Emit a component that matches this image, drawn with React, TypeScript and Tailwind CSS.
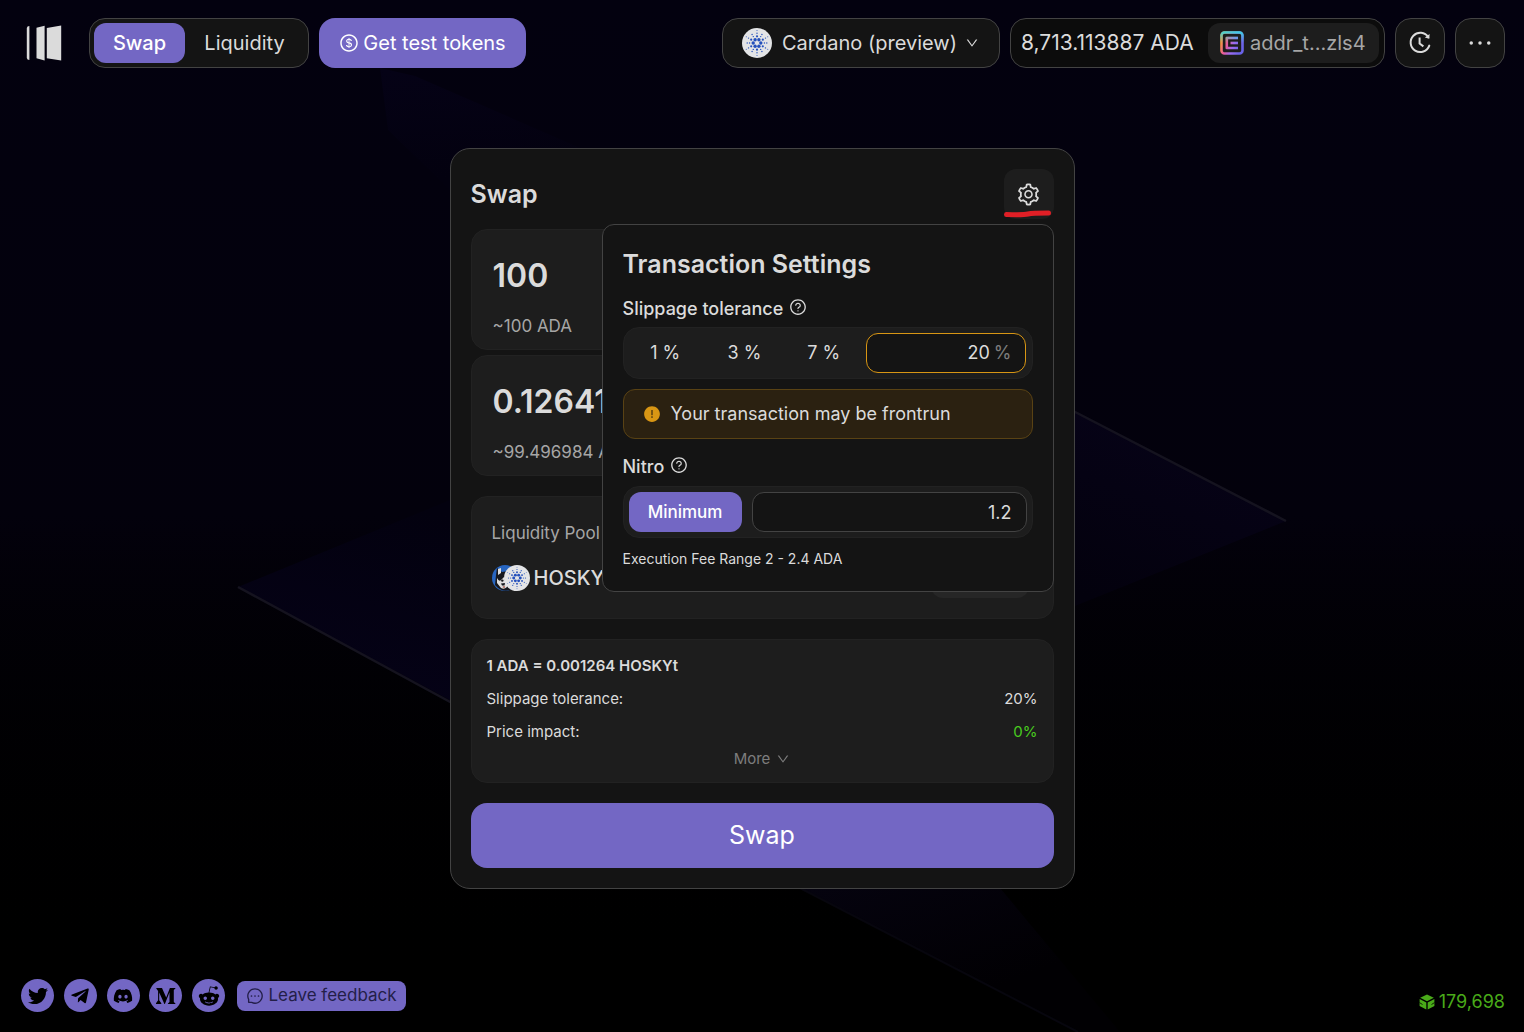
import { useState } from "react";
import {
  AiFillExclamationCircle,
  AiOutlineDollar,
  AiOutlineDown,
  AiOutlineEllipsis,
  AiOutlineMessage,
  AiOutlineQuestionCircle,
  AiOutlineSetting,
} from "react-icons/ai";
import { FaDiscord, FaRedditAlien, FaTelegramPlane, FaTwitter } from "react-icons/fa";

function Backdrop() {
  return (
    <svg
      className="pointer-events-none absolute inset-0 h-full w-full"
      viewBox="0 0 1524 1032"
      preserveAspectRatio="xMidYMid slice"
      aria-hidden="true"
    >
      <defs>
        <linearGradient id="left" x1="0.3" y1="0.9" x2="0.6" y2="0">
          <stop offset="0" stopColor="#050217" />
          <stop offset="1" stopColor="#03010f" />
        </linearGradient>
        <linearGradient id="right" x1="0.7" y1="0" x2="0.3" y2="1">
          <stop offset="0" stopColor="#070319" />
          <stop offset="1" stopColor="#03010d" />
        </linearGradient>
        <linearGradient id="top" x1="0.2" y1="0" x2="0.3" y2="0.9">
          <stop offset="0" stopColor="#050216" />
          <stop offset="1" stopColor="#03010f" />
        </linearGradient>
        <linearGradient id="bottom" x1="0" y1="0" x2="0.6" y2="0.7">
          <stop offset="0" stopColor="#05030f" />
          <stop offset="1" stopColor="#010003" />
        </linearGradient>
      </defs>
      <path d="M380 68 L415 76 L585 150 L450 190 L388 130Z" fill="url(#top)" />
      <path d="M238 587 L450 500 L500 500 L500 727Z" fill="url(#left)" />
      <path d="M1060 404 L1286 521 L1060 612Z" fill="url(#right)" />
      <path d="M800 888 L1000 888 L1120 1032 L1078 1032Z" fill="url(#bottom)" />
      <path d="M238 587 L500 729" fill="none" stroke="#15131f" strokeWidth="2.5" />
      <path d="M1050 399 L1286 521" fill="none" stroke="#15131f" strokeWidth="2.5" />
      <path d="M800 888 L1078 1032" fill="none" stroke="#07060e" strokeWidth="2" />
    </svg>
  );
}

function Logo() {
  return (
    <svg width="36" height="36" viewBox="0 0 36 36" fill="#dbdbdb" role="img" aria-label="Home">
      <path d="M0.8 3 Q1 1.2 3.4 1 V35 Q1 34.8 0.8 33Z" />
      <path d="M10.5 2.8 L18.6 0.8 V35.4 L10.5 33.2Z" />
      <path d="M20.8 3 L35.2 0.4 V35.6 L20.8 33.2Z" />
    </svg>
  );
}

const ring = (count: number, radius: number, dot: number, turn: number) =>
  Array.from({ length: count }, (_, i) => {
    const a = ((i * 360) / count + turn) * (Math.PI / 180);
    return (
      <circle
        key={`${radius}-${i}`}
        cx={15 + radius * Math.cos(a)}
        cy={15 + radius * Math.sin(a)}
        r={dot}
      />
    );
  });

function CardanoIcon({ className }: { className: string }) {
  return (
    <svg viewBox="0 0 30 30" className={className} aria-hidden="true">
      <circle cx="15" cy="15" r="15" fill="#e3e4e6" />
      <g fill="#2450bc">
        {ring(6, 3.8, 1.7, 0)}
        {ring(6, 6.7, 1.1, 30)}
        {ring(6, 7.4, 0.7, 0)}
        {ring(6, 9.8, 0.7, 0)}
        {ring(6, 9.8, 0.7, 30)}
        {ring(6, 12.4, 0.5, 30)}
      </g>
    </svg>
  );
}

function HoskyIcon({ className }: { className: string }) {
  return (
    <svg viewBox="0 0 26 26" className={className} aria-hidden="true">
      <circle cx="13" cy="13" r="13" fill="#2765c0" />
      <path d="M4 10 L5 3 L10 7 L16 6 L20 4 L21 14 L18 25 Q10 28 3 20Z" fill="#16181d" />
      <path d="M6 4 L9 3 L9 8 L6 10Z" fill="#dedede" />
      <path d="M5 13 Q7 17 9 15 L12 12 L13 16 L16 18 L15 22 Q12 25 9 23 L5 18Z" fill="#dedede" />
      <circle cx="10.3" cy="15.6" r="1.2" fill="#16181d" />
      <path d="M9 18.5 L13 18 L12.5 20.5 L10 20.5Z" fill="#16181d" />
      <path d="M10.8 21 H13 V23 H10.8Z" fill="#b8837a" />
    </svg>
  );
}

function WalletIcon() {
  return (
    <svg width="24" height="24" viewBox="0 0 24 24" fill="none" aria-hidden="true">
      <defs>
        <linearGradient id="wallet" x1="2" y1="8" x2="22" y2="16" gradientUnits="userSpaceOnUse">
          <stop offset="0" stopColor="#f59a3c" />
          <stop offset="0.3" stopColor="#e85a9a" />
          <stop offset="0.6" stopColor="#9a6cf0" />
          <stop offset="1" stopColor="#6a62e8" />
        </linearGradient>
        <linearGradient id="walletTop" x1="0" y1="0" x2="0" y2="24" gradientUnits="userSpaceOnUse">
          <stop offset="0" stopColor="#35d6e0" />
          <stop offset="0.5" stopColor="#35d6e0" stopOpacity="0" />
        </linearGradient>
      </defs>
      {["url(#wallet)", "url(#walletTop)"].map((stroke) => (
        <g key={stroke} stroke={stroke} strokeWidth="2.6" strokeLinejoin="round">
          <rect x="1.5" y="1.5" width="21" height="21" rx="3" />
          <path d="M18 7 H6.8 V17 H18" />
          <path d="M10.5 12 H18" />
        </g>
      ))}
    </svg>
  );
}

function HistoryIcon() {
  return (
    <svg width="24" height="24" viewBox="0 0 24 24" fill="none" stroke="#dbdbdb" strokeWidth="2" aria-hidden="true">
      <path d="M20.3 6.2 A9.6 9.6 0 1 0 21.3 14.6" strokeLinecap="round" />
      <path d="M21.6 3 L21.3 7.8 L16.8 6.6Z" fill="#dbdbdb" stroke="none" />
      <path d="M11.6 6.5 V12.6 L15.4 15.4" />
    </svg>
  );
}

function MediumIcon() {
  return (
    <svg width="20" height="18" viewBox="0 0 20 18" fill="currentColor" aria-hidden="true">
      <path d="M0.3 1 H6 L10.2 10.4 L13.9 1 H19.4 V1.5 L17.8 3 V15 L19.4 16.5 V17 H11.9 V16.5 L13.5 15 V5.2 L8.9 17 H8.4 L3.2 5.4 V13.2 L5.3 16.3 V17 H0 V16.3 L2.1 13.2 V4 L0.3 1.6Z" />
    </svg>
  );
}

function CubeIcon() {
  return (
    <svg width="16" height="16" viewBox="0 0 16 16" fill="#49aa19" aria-hidden="true">
      <path d="M8 0.5 L14.8 3.8 L8 7.2 L1.2 3.8Z" />
      <path d="M0.6 5 L7.3 8.4 V15.5 L0.6 12Z" />
      <path d="M15.4 5 L8.7 8.4 V15.5 L15.4 12Z" />
      <path d="M0.5 8.6 L3.5 10.5 M15.5 8.6 L12.5 10.5" stroke="#000" strokeWidth="0.8" />
    </svg>
  );
}

function Header() {
  return (
    <header className="relative flex items-center justify-between pt-[18px] pr-[19px] pl-[26px] text-xl">
      <div className="flex items-center gap-2.5">
        <a href="#home" className="mr-[17px]">
          <Logo />
        </a>
        <nav className="flex h-[50px] w-[220px] items-center rounded-2xl border border-[#434343] bg-[#141414] p-1">
          <a
            href="#swap"
            className="flex h-10 w-[91px] items-center justify-center rounded-xl bg-[#7367c4] font-medium text-white"
          >
            Swap
          </a>
          <a href="#liquidity" className="flex h-10 flex-1 items-center justify-center">
            Liquidity
          </a>
        </nav>
        <button className="flex h-[50px] w-[207px] items-center justify-center gap-1 rounded-2xl bg-[#7367c4] text-xl whitespace-nowrap text-white">
          <AiOutlineDollar className="size-5" />
          Get test tokens
        </button>
      </div>
      <div className="flex items-center gap-2.5">
        <button className="flex h-[50px] w-[278px] items-center rounded-2xl border border-[#434343] bg-[#141414] pl-[19px] whitespace-nowrap">
          <CardanoIcon className="size-[30px] shrink-0" />
          <span className="ml-2.5">Cardano (preview)</span>
          <AiOutlineDown className="ml-2 size-3.5 shrink-0" />
        </button>
        <div className="flex h-[50px] w-[375px] items-center justify-between rounded-2xl border border-[#434343] bg-[#0c0c0c] pr-[5px] pl-2.5 whitespace-nowrap">
          <span className="text-[21px]">8,713.113887 ADA</span>
          <button className="flex h-10 w-[171px] items-center gap-1.5 rounded-xl bg-[#1d1d1d] pl-3 text-[#a6a6a6]">
            <WalletIcon />
            addr_t...zls4
          </button>
        </div>
        <button
          aria-label="Transaction history"
          className="flex size-[50px] items-center justify-center rounded-2xl border border-[#434343] bg-[#141414]"
        >
          <HistoryIcon />
        </button>
        <button
          aria-label="More options"
          className="flex size-[50px] items-center justify-center rounded-2xl border border-[#434343] bg-[#141414]"
        >
          <AiOutlineEllipsis className="size-8" />
        </button>
      </div>
    </header>
  );
}

function AmountPanel({ label, amount, estimate }: { label: string; amount: string; estimate: string }) {
  return (
    <div className="flex h-[121px] flex-col rounded-2xl border border-[#222] bg-[#1d1d1d] px-[21px] pt-6">
      <input
        aria-label={label}
        defaultValue={amount}
        className="h-11 w-60 bg-transparent text-[32px] font-semibold outline-none"
      />
      <span className="mt-4 text-[17px] leading-6 text-[#a6a6a6]">{estimate}</span>
    </div>
  );
}

function FieldLabel({ htmlFor, children }: { htmlFor: string; children: string }) {
  return (
    <div className="flex h-7 items-center gap-1.5">
      <label htmlFor={htmlFor} className="text-lg font-medium">
        {children}
      </label>
      <button aria-label={`About ${children}`} className="pb-1">
        <AiOutlineQuestionCircle className="size-[18px]" />
      </button>
    </div>
  );
}

function TransactionSettings() {
  const [slippage, setSlippage] = useState("20");
  const [nitro, setNitro] = useState("1.2");
  return (
    <div
      role="dialog"
      aria-label="Transaction Settings"
      className="absolute top-full right-0 z-10 mt-[5px] w-[452px] rounded-xl border border-[#434343] bg-[#141414] p-5"
    >
      <h2 className="mb-3 text-[25px] leading-[38px] font-semibold">Transaction Settings</h2>
      <FieldLabel htmlFor="slippage">Slippage tolerance</FieldLabel>
      <div className="mt-1 flex h-[52px] items-center rounded-2xl border border-[#222] bg-[#1d1d1d] pr-[5px] pl-0.5 text-lg">
        {["1", "3", "7"].map((value) => (
          <button key={value} onClick={() => setSlippage(value)} className="h-10 flex-1">
            {value} %
          </button>
        ))}
        <div className="ml-[3px] flex h-10 w-40 items-center gap-1 rounded-xl border border-[#d89614] bg-[#141414] pr-3.5">
          <input
            id="slippage"
            value={slippage}
            onChange={(e) => setSlippage(e.target.value)}
            className="w-0 flex-1 bg-transparent text-right outline-none"
          />
          <span className="text-[#7d7d7d]">%</span>
        </div>
      </div>
      <div
        role="alert"
        className="mt-2.5 mb-3.5 flex h-[50px] items-center gap-2.5 rounded-xl border border-[#594214] bg-[#2b2111] pl-[19px] text-lg"
      >
        <AiFillExclamationCircle className="size-[18px] text-[#d89614]" />
        Your transaction may be frontrun
      </div>
      <FieldLabel htmlFor="nitro">Nitro</FieldLabel>
      <div className="mt-[5px] flex h-[52px] items-center gap-2.5 rounded-2xl border border-[#222] bg-[#1d1d1d] px-[5px] text-lg">
        <button
          onClick={() => setNitro("1.2")}
          className="h-10 w-[113px] rounded-xl bg-[#7367c4] text-[17px] font-medium text-white"
        >
          Minimum
        </button>
        <input
          id="nitro"
          value={nitro}
          onChange={(e) => setNitro(e.target.value)}
          className="h-10 w-0 flex-1 rounded-xl border border-[#434343] bg-[#141414] pr-3.5 text-right outline-none"
        />
      </div>
      <p className="mt-2 text-sm leading-[25px]">Execution Fee Range 2 - 2.4 ADA</p>
    </div>
  );
}

function SwapCard() {
  return (
    <section className="w-[625px] max-w-full rounded-[20px] border border-[#434343] bg-[#141414] p-5">
      <div className="relative flex h-[50px] items-center justify-between">
        <h1 className="text-[25px] leading-[38px] font-semibold">Swap</h1>
        <button
          aria-label="Transaction settings"
          className="relative flex size-[50px] items-center justify-center rounded-xl bg-[#1d1d1d]"
        >
          <AiOutlineSetting className="size-[25px]" />
          <svg
            className="absolute bottom-0 left-0"
            width="50"
            height="10"
            viewBox="0 0 50 10"
            fill="none"
            aria-hidden="true"
          >
            <path d="M2.5 5.5 Q20 6 24 5 T44.5 4" stroke="#e01f26" strokeWidth="5" strokeLinecap="round" />
          </svg>
        </button>
        <TransactionSettings />
      </div>
      <div className="mt-2.5 flex flex-col gap-[5px]">
        <AmountPanel label="Amount to pay" amount="100" estimate="~100 ADA" />
        <AmountPanel label="Amount to receive" amount="0.126416" estimate="~99.496984 ADA" />
      </div>
      <div className="mt-5 h-[123px] rounded-2xl border border-[#222] bg-[#1d1d1d] px-5 pt-6">
        <h3 className="text-[17px] leading-6 text-[#a6a6a6]">Liquidity Pool</h3>
        <div className="mt-3 flex h-[42px] items-center">
          <HoskyIcon className="size-[26px]" />
          <CardanoIcon className="-ml-3.5 size-[26px]" />
          <span className="ml-1 flex-1 text-xl font-medium">HOSKYt/ADA</span>
          <button className="mr-1 h-10 w-[98px] rounded-xl bg-[#262626] text-lg">Change</button>
        </div>
      </div>
      <div className="mt-5 flex h-36 flex-col rounded-2xl border border-[#222] bg-[#1d1d1d] px-[15px] pt-[13px] text-[15px] leading-[25px]">
        <p className="font-semibold">1 ADA = 0.001264 HOSKYt</p>
        <dl className="mt-2 grid grid-cols-[1fr_auto] gap-y-2">
          <dt>Slippage tolerance:</dt>
          <dd className="text-right">20%</dd>
          <dt>Price impact:</dt>
          <dd className="text-right text-[#49cc1f]">0%</dd>
        </dl>
        <button className="flex items-center gap-1.5 self-center leading-[30px] text-[#7d7d7d]">
          More
          <AiOutlineDown className="size-3.5" />
        </button>
      </div>
      <button className="mt-5 h-[65px] w-full rounded-2xl bg-[#7367c4] text-[25px] text-white">Swap</button>
    </section>
  );
}

const socials = [
  { name: "Twitter", icon: <FaTwitter className="size-5" /> },
  { name: "Telegram", icon: <FaTelegramPlane className="size-5" /> },
  { name: "Discord", icon: <FaDiscord className="size-5" /> },
  { name: "Medium", icon: <MediumIcon /> },
  { name: "Reddit", icon: <FaRedditAlien className="size-[22px]" /> },
];

function Footer() {
  return (
    <footer className="relative mt-auto flex items-center justify-between pr-[19px] pb-5 pl-[21px]">
      <div className="flex items-center gap-3">
        <div className="flex w-[204px] justify-between">
          {socials.map((s) => (
            <a
              key={s.name}
              href={`#${s.name}`}
              aria-label={s.name}
              className="flex size-[33px] items-center justify-center rounded-full bg-[#7367c4] text-black"
            >
              {s.icon}
            </a>
          ))}
        </div>
        <button className="flex h-[30px] w-[169px] items-center justify-center gap-1 rounded-lg bg-[#7367c4] text-[17px] whitespace-nowrap text-[#231e48]">
          <AiOutlineMessage className="size-[18px]" />
          Leave feedback
        </button>
      </div>
      <span className="flex items-center gap-1 pt-3 text-lg leading-5 text-[#49aa19]">
        <CubeIcon />
        179,698
      </span>
    </footer>
  );
}

export default function App() {
  return (
    <div className="relative flex min-h-screen flex-col overflow-hidden bg-linear-to-b from-[#03010f] via-[#03010c] to-black font-['Inter',sans-serif] text-[#dbdbdb]">
      <Backdrop />
      <Header />
      <main className="relative mt-20 mb-20 flex justify-center">
        <SwapCard />
      </main>
      <Footer />
    </div>
  );
}
